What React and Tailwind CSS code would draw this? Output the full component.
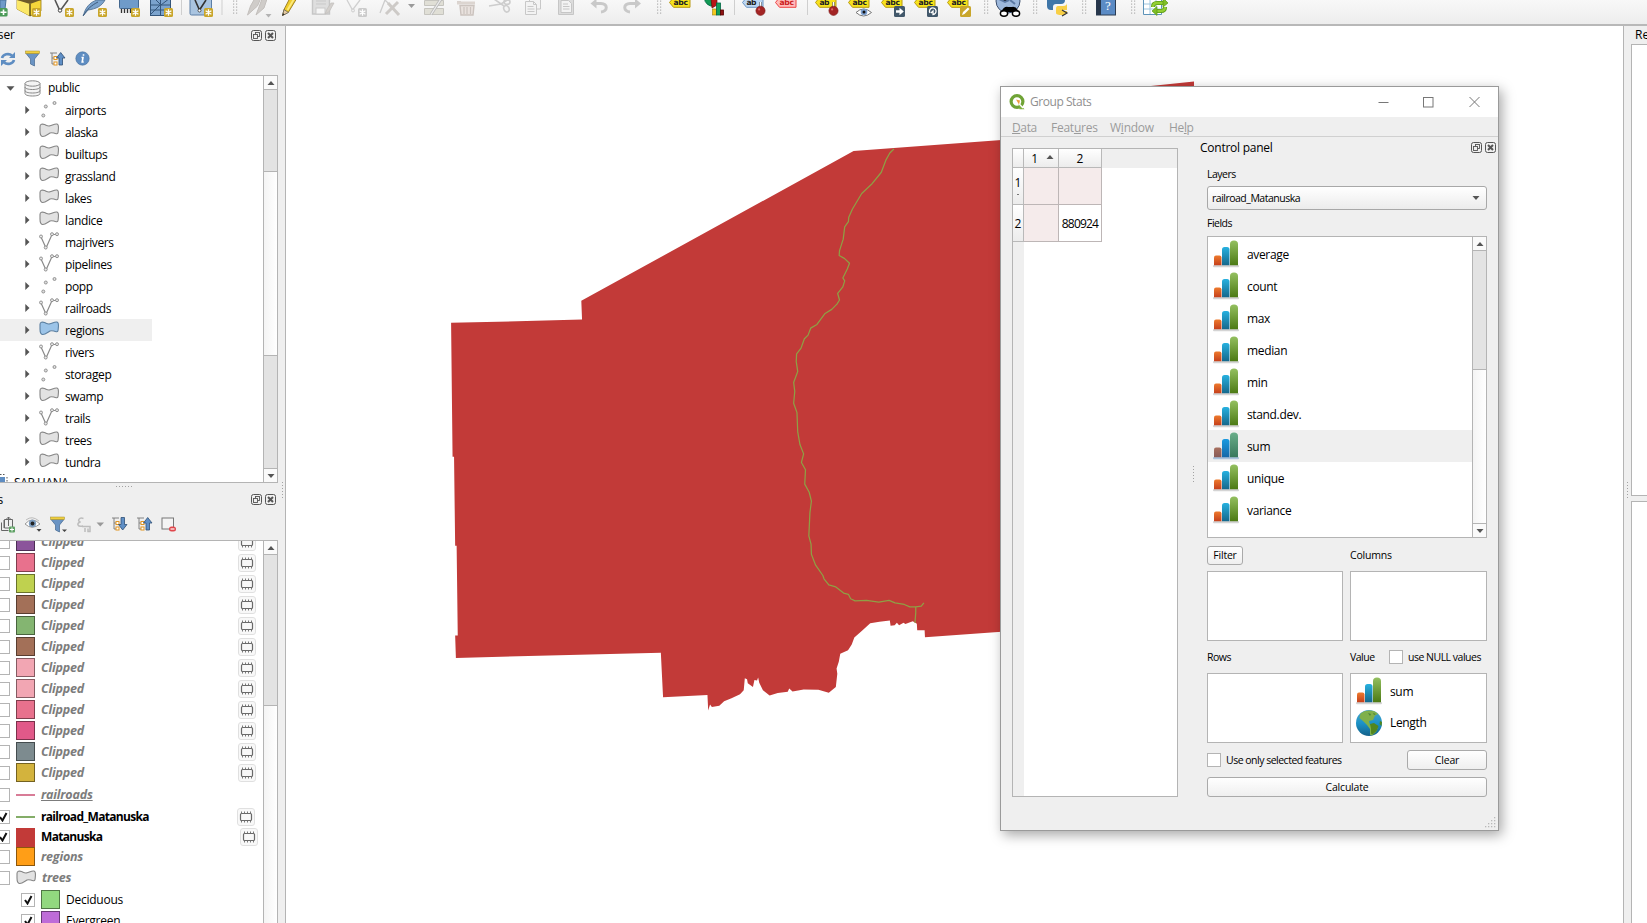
import React from "react";

const ui = "font-['Open_Sans','Noto_Sans',sans-serif]";

/* ---------- toolbar ---------- */

function Star({ x, y = 8, c = "#c9a62b" }) {
  return (
    <g>
      <rect x={x} y={y} width="9" height="9" rx="1.5" fill={c} />
      <path d={`M${x + 4.5} ${y + 1.2}v6.6M${x + 1.6} ${y + 2.8}l5.8 3.4M${x + 7.4} ${y + 2.8}l-5.8 3.4`} stroke="#fff" strokeWidth="1.3" />
    </g>
  );
}

function Grip({ x }) {
  return (
    <g fill="#b0b0b0">
      {[0, 3, 6, 9, 12].map((y) => (
        <g key={y}>
          <rect x={x} y={y + 0.5} width="1.2" height="1.2" />
          <rect x={x + 3} y={y + 0.5} width="1.2" height="1.2" />
        </g>
      ))}
    </g>
  );
}

const Sep = ({ x }) => <path d={`M${x} 0V15`} stroke="#cfcfcf" />;

function Tag({ x, fill = "#f7e21c", stroke = "#b79a12", color = "#222", text = "abc" }) {
  return (
    <g>
      <path d={`M${x} 2.5l4-5H${x + 20.5}V7.3H${x + 4}z`} fill={fill} stroke={stroke} strokeWidth="1" />
      <text x={x + 4} y="5.4" fontSize="7.6" fontWeight="700" fill={color} className="font-['DejaVu_Sans',sans-serif]" textLength={text === "ab" ? 10 : 14.5}>
        {text}
      </text>
    </g>
  );
}

const Pin = ({ x }) => (
  <g>
    <path d={`M${x} 2v6`} stroke="#777" strokeWidth="2.4" />
    <path d={`M${x} 2v6`} stroke="#fff" strokeWidth="1" />
    <circle cx={x} cy="10.8" r="4.6" fill="#a32424" stroke="#7d1a1a" strokeWidth=".6" />
    <circle cx={x - 1.4} cy="9.4" r="1.1" fill="#d66" />
  </g>
);

const tools = [
  [0, 13, <g key="a"><path d="M0 0h6l-1 9H0z" fill="#6f9bc9" stroke="#4a729c" /><rect x="-1" y="8" width="8.6" height="8.5" rx="1.5" fill="#4a9a57" /><path d="M3.5 9.5v5.5M.5 12.3h6" stroke="#fff" strokeWidth="1.6" /></g>],
  [13, 48, <g key="b"><path d="M17 0v9l13 7 11-5V0z" fill="#f6d63a" stroke="#9a7b10" strokeWidth=".8" /><path d="M17 0v9l13 7V3z" fill="#fbe868" /><path d="M17 0l13 4 11-4z" fill="#6d5a2a" /><path d="M30 4v12" stroke="#463a14" strokeWidth="1.3" /><Star x={32} y={8} /></g>],
  [48, 78, <g key="c"><path d="M55 0l5 11L68 0" fill="none" stroke="#555" strokeWidth="1.6" /><circle cx="60" cy="10.5" r="1.7" fill="#fff" stroke="#444" /><Star x={65} /></g>],
  [78, 113, <g key="d"><path d="M83.500 15.500C85 8 90 2 97 0h8c-3 6-9 9-17 10z" fill="#7ba3cd" stroke="#48698e" strokeWidth=".8" /><path d="M83 16C87 9 92 5 98 2" stroke="#3d5b7d" fill="none" /><Star x={98} /></g>],
  [113, 145, <g key="e"><rect x="119.500" y="-4" width="19" height="12.500" rx="1" fill="#6f9bc9" stroke="#44688f" /><path d="M121.500 9v4M124.500 9v4M127.500 9v4M130.500 9v4" stroke="#333" strokeWidth="1.300" /><Star x={131} /></g>],
  [145, 177, <g key="f"><rect x="150.500" y="-4" width="20" height="19.500" fill="#7ba3cd" stroke="#34567b" /><path d="M150 5h21M160.500-2V16M150 10h21M151 14l9-9M161 5l-7-7M161 5l9-7" stroke="#34567b" fill="none" /><Star x={164} /></g>],
  [177, 229, <g key="g"><Sep x={181.5} /><rect x="190" y="-3" width="21.500" height="18" rx="1.500" fill="#a9c4e0" stroke="#5c7fa6" /><path d="M195 0l4.500 10L206 0" fill="none" stroke="#333" strokeWidth="1.600" /><circle cx="199.500" cy="10.500" r="1.500" fill="#fff" stroke="#333" strokeWidth=".8" /><Star x={204} /><Sep x={222} /></g>],
  [229, 275, <g key="h"><Grip x={233} /><path d="M247.500 15l3-9 4-7h6l-3 7zM256 15l3-8 3-8h5l-3 9z" fill="#cfccc9" stroke="#c3bfbc" /><path d="M265.500 14h6l-3 3.500z" fill="#b3b3b3" /></g>],
  [275, 304, <g key="i"><path d="M282.500 15.500l1.500-6L290-2h7l-8.500 14z" fill="#f0cd2b" stroke="#94761a" strokeWidth=".9" /><path d="M287.500 10L294-1" stroke="#fbe97e" strokeWidth="1.800" /><path d="M282.500 15.500l1.500-6 4.500 3z" fill="#e4c9a0" stroke="#555" strokeWidth=".7" /><path d="M282.200 15.800l.8-2.500 1.600 1z" fill="#222" /></g>],
  [304, 340, <g key="j"><path d="M312.500-2h17v16h-17z" fill="#dedede" stroke="#c6c6c6" strokeWidth="1.400" /><rect x="316" y="8" width="9" height="6" fill="#f6f6f6" stroke="#cacaca" /><path d="M316 1h10M316 4h10" stroke="#c9c9c9" /><path d="M325 14l2-5 4-6h3l-5 9z" fill="#d3d0cd" stroke="#c2bebb" strokeWidth=".7" /></g>],
  [340, 374, <g key="k"><path d="M347 0l5.500 10L360 0" fill="none" stroke="#d0d0d0" strokeWidth="1.300" /><circle cx="353" cy="10.500" r="1.500" fill="#eee" stroke="#cfcfcf" /><Star x={358} c="#cbcbcb" /></g>],
  [374, 418, <g key="l"><path d="M380 13l5-13 8 8" fill="none" stroke="#ccc" strokeWidth="1.300" /><path d="M386 14L398 2M388 3l11 12" stroke="#cdcac7" strokeWidth="3" /><path d="M408 4h7l-3.500 4z" fill="#9a9a9a" /></g>],
  [418, 450, <g key="m"><path d="M424.500.500h19v5h-19zM424.500 8.500h19v6h-19z" fill="#e0dfd6" stroke="#c6c5bf" /><path d="M431 14.500L441-1" stroke="#bbb" strokeWidth="3" /><path d="M431 14.500L441-1" stroke="#eee" strokeWidth="1.200" /></g>],
  [450, 482, <g key="n"><path d="M457 2h4M460 5.500h14l-1 9.500h-12z" fill="#e9e2de" stroke="#cbc3be" strokeWidth="1.400" /><path d="M457 1.500h18v3h-18z" fill="#dcd5d0" /><path d="M464 7v7M467 7v7M470.500 7v7" stroke="#cbc3be" strokeWidth="1.200" /></g>],
  [482, 518, <g key="o" fill="none" stroke="#cdcdcd" strokeWidth="1.600"><path d="M489 6l12-2 8-5M494-1l10 7" /><ellipse cx="507" cy="2" rx="3" ry="2.300" /><ellipse cx="506.500" cy="9" rx="2.600" ry="3.300" transform="rotate(-25 506 9)" /></g>],
  [518, 550, <g key="p" fill="#f3f3f3" stroke="#c8c8c8"><path d="M529.500-2h11v11h-11z" /><path d="M525.500 1.500h8l3 3v10h-11z" /><path d="M533.500 1.500v3h3M527.500 6.500h6M527.500 9h7M527.500 11.500h7" fill="none" /></g>],
  [550, 582, <g key="q" fill="#f3f3f3" stroke="#c6c6c6"><path d="M558.500-2h15v16.500h-15z" fill="#dcdcdc" /><path d="M561 .500h7.500l3 3v9H561z" /><path d="M563 4h5M563 6.500h6.500M563 9h6.500" /></g>],
  [582, 650, <g key="r" fill="none" stroke="#c9c9c9" strokeWidth="3"><path d="M593 3.500h8c7 0 7 8 0 8.500" /><path d="M590.500 3.500l6-5v10z" fill="#c9c9c9" stroke="none" /><path d="M638 3.500h-8c-7 0-7 8 0 8.500" /><path d="M641 3.500l-6-5v10z" fill="#c9c9c9" stroke="none" /></g>],
  [650, 697, <g key="s"><Grip x={657} /><Tag x={669.500} /></g>],
  [697, 738, <g key="t"><path d="M714-2v8a8 8 0 0 1-9.500-8z" fill="#139a55" stroke="#064" strokeWidth=".8" /><path d="M711-2h6v7l-5 3z" fill="#b71616" stroke="#600" strokeWidth=".6" /><rect x="712.500" y="9" width="4" height="6" fill="#f3c81e" stroke="#a5850a" strokeWidth=".6" /><rect x="716.500" y="3" width="4" height="12" fill="#13a05a" stroke="#064" strokeWidth=".8" /><rect x="720.500" y="10" width="3" height="5" fill="#8e1212" stroke="#500" strokeWidth=".8" /><Sep x={734.500} /></g>],
  [738, 770, <g key="u"><Tag x={742.500} fill="#bcd6f2" stroke="#6b95c4" text="ab" /><Pin x={760.500} /></g>],
  [770, 811, <g key="v"><Tag x={775.500} fill="#fbb" stroke="#e44" color="#c22" /><Sep x={807.500} /></g>],
  [811, 843, <g key="w"><Tag x={815.500} text="ab" /><Pin x={833.500} /></g>],
  [843, 876, <g key="x"><Tag x={848.500} /><path d="M856 12.500q7.500-7 15.500 0-8 7-15.500 0z" fill="#fff" stroke="#777" /><circle cx="864" cy="12" r="3.300" fill="#7da0d0" /><circle cx="864" cy="12" r="1.500" fill="#111" /></g>],
  [876, 909, <g key="y"><Tag x={881.500} /><rect x="894" y="6" width="11" height="11" rx="1.500" fill="#42586b" /><path d="M896 10.200h3.500v-2.400l4.300 3.700-4.300 3.700v-2.400H896z" fill="#fff" /></g>],
  [909, 942, <g key="z"><Tag x={914.500} /><rect x="927" y="6" width="11" height="11" rx="1.500" fill="#42586b" /><path d="M930 13a3.300 3.300 0 1 1 3 1.500v-3.500l-2 2" fill="none" stroke="#fff" strokeWidth="1.300" /></g>],
  [942, 977, <g key="A"><Tag x={947.500} /><rect x="960" y="6" width="11" height="11" rx="1.500" fill="#c9a62b" /><path d="M962 15l1-3 5-4.500 1.500 1.500-5 5z" fill="#fff" /></g>],
  [977, 1028, <g key="B"><Grip x={984} /><circle cx="1008" cy="1" r="12" fill="#9db8dc" stroke="#3c4f6e" /><path d="M999-1l6 3 4-2M1010 0l5 4" stroke="#5c7aa5" strokeWidth="2" /><path d="M1001 12q3-6 7-5h4q4-1 7 5z" fill="#000" /><ellipse cx="1004" cy="13.500" rx="3.600" ry="2.700" fill="#fff" stroke="#000" strokeWidth="1.500" /><ellipse cx="1016" cy="13.500" rx="3.600" ry="2.700" fill="#fff" stroke="#000" strokeWidth="1.500" /></g>],
  [1028, 1077, <g key="C"><Grip x={1033} /><path d="M1047 0v6q0 4 4 4h2V7q0-3 3-3h5q4 0 4-4z" fill="#3f76a8" /><path d="M1067 0v3q0 3-4 3h-5q-2 0-2 3v4q0 2 6 2 6 0 5-4h-5v-1h5z" fill="#f8cf46" /><path d="M1062 10l5 3-5 3" fill="none" stroke="#333" strokeWidth="1.200" /></g>],
  [1077, 1126, <g key="D"><Grip x={1082} /><rect x="1096.500" y="-3" width="19" height="18" fill="#5b8bc5" stroke="#2c3c53" /><rect x="1096.500" y="-3" width="4.500" height="18" fill="#27364b" /><text x="1105" y="10" fontSize="13" fill="#fff" className="font-['Liberation_Serif',serif]">?</text></g>],
  [1126, 1180, <g key="E"><Grip x={1131} /><path d="M1143.500-2h18v16.500h-18z" fill="#fff" stroke="#5d93b8" /><path d="M1144 4h18M1144 9h18M1150 0v14M1156 0v14" stroke="#9cc5de" /><path d="M1164 3h-7q-4 0-4 4M1154 11h7q4 0 4-4" fill="none" stroke="#5a9a14" strokeWidth="4" /><path d="M1164 3h-7q-4 0-4 4M1154 11h7q4 0 4-4" fill="none" stroke="#93cf32" strokeWidth="2.400" /><path d="M1163-2l5 5-5 4zM1157 6.500l-5 4.500 5 4.500z" fill="#7fbe25" stroke="#5a9a14" strokeWidth=".7" /></g>],
];

function Toolbar() {
  return (
    <div className="flex h-[26px] shrink-0 border-b-2 border-[#b8b8b8] bg-gradient-to-b from-[#f8f8f8] to-[#ededed]">
      {tools.map(([a, b, g]) => (
        <svg key={a} width={b - a} height="24" viewBox={`${a} 0 ${b - a} 24`} className="shrink-0">
          {g}
        </svg>
      ))}
    </div>
  );
}

/* ---------- small pieces ---------- */

function DockButtons() {
  return (
    <div className="flex gap-[3px]">
      <svg width="11" height="11" viewBox="0 0 11 11" fill="none" stroke="#555">
        <rect x=".5" y=".5" width="10" height="10" rx="2" />
        <rect x="4.500" y="2.500" width="4" height="4" strokeWidth=".9" />
        <rect x="2.500" y="4.500" width="4" height="4" fill="#efefef" strokeWidth=".9" />
      </svg>
      <svg width="11" height="11" viewBox="0 0 11 11" fill="none" stroke="#555">
        <rect x=".5" y=".5" width="10" height="10" rx="2" />
        <path d="M3 3l5 5M8 3l-5 5" strokeWidth="2" />
      </svg>
    </div>
  );
}

const Up = () => <svg width="8" height="4" viewBox="0 0 8 4"><path d="M.5 4L4 0l3.500 4z" fill="#555" /></svg>;
const Down = () => <svg width="8" height="4" viewBox="0 0 8 4"><path d="M.5 0L4 4l3.500-4z" fill="#555" /></svg>;

const DotsV = () => <svg width="2" height="18" viewBox="0 0 2 18"><path d="M.5 0v18" stroke="#a2a2a2" strokeDasharray="1 2" /></svg>;
const DotsH = () => <svg width="17" height="2" viewBox="0 0 17 2"><path d="M0 .5h17" stroke="#a2a2a2" strokeDasharray="1 2" /></svg>;

function ScrollBar({ before, handle, after, last = true }) {
  return (
    <div className="flex w-[14px] shrink-0 flex-col border-l border-[#b4b4b4]">
      <div className="flex h-[14px] shrink-0 items-center justify-center border-b border-[#b4b4b4] bg-[#fafafa]"><Up /></div>
      <div className={`shrink-0 bg-[#e3e3e3] ${before}`} />
      <div className={`border-t border-[#b4b4b4] bg-gradient-to-r from-[#f4f4f4] to-white ${handle}`} />
      {after && <div className={`bg-[#e3e3e3] ${after}`} />}
      {last && <div className="flex h-[14px] shrink-0 items-center justify-center border-t border-[#b4b4b4] bg-[#fafafa]"><Down /></div>}
    </div>
  );
}

function PolyIcon({ blue }) {
  return (
    <svg width="20" height="15" viewBox="0 0 20 15" className="shrink-0">
      <path d="M1 3.500C1 1 3.500.800 5.500 1.500s3 2 5.500 1.300S16 .500 18 1s1.500 3 1.300 6-.3 4-2 3.700c-3-.5-4.300-1.700-6.300-.7S6 13.800 3.500 13.500 1 11 1 8z" fill={blue ? "#9cc4e8" : "#e2e2e2"} stroke={blue ? "#5b7fa0" : "#858585"} strokeWidth="1.100" />
    </svg>
  );
}
function LineIcon() {
  return (
    <svg width="20" height="18" viewBox="0 0 20 18" className="shrink-0" fill="none" stroke="#8a8a8a">
      <path d="M2 5l5 11L13 2.500h5" strokeWidth="1.200" />
      <g fill="#e8e8e8" strokeWidth=".9"><circle cx="2" cy="4.500" r="1.500" /><circle cx="6.700" cy="15.500" r="1.500" /><circle cx="13" cy="2.200" r="1.500" /><circle cx="18" cy="2.200" r="1.500" /></g>
    </svg>
  );
}
function PointIcon() {
  return (
    <svg width="20" height="18" viewBox="0 0 20 18" className="shrink-0" fill="#ddd" stroke="#8a8a8a" strokeWidth=".9">
      <circle cx="4.300" cy="15.500" r="1.500" /><circle cx="6.800" cy="6.500" r="1.500" /><circle cx="15.500" cy="3" r="1.500" />
    </svg>
  );
}

const items = [
  ["airports", "p"], ["alaska", "g"], ["builtups", "g"], ["grassland", "g"], ["lakes", "g"], ["landice", "g"],
  ["majrivers", "l"], ["pipelines", "l"], ["popp", "p"], ["railroads", "l"], ["regions", "b"], ["rivers", "l"],
  ["storagep", "p"], ["swamp", "g"], ["trails", "l"], ["trees", "g"], ["tundra", "g"],
];

const Funnel = ({ arrow }) => (
  <svg width="18" height="17" viewBox="0 0 18 17">
    <path d="M1 3.500h13L9.500 9v7l-4-2V9z" fill="#6a94c4" stroke="#45698f" strokeWidth=".7" />
    <rect x=".5" y="1" width="14" height="2.600" fill="#f0cf3f" stroke="#a08a2a" strokeWidth=".5" />
    {arrow && <path d="M12 13.500h5l-2.500 2.500z" fill="#444" />}
  </svg>
);
const TreeArrow = ({ down }) => (
  <svg width="16" height="16" viewBox="0 0 16 16">
    <path d="M0 2h7M2 2v11h3M2 7h3" stroke="#777" fill="none" strokeWidth=".9" />
    <rect x="4" y="5.500" width="3" height="3" fill="#fff" stroke="#e29520" /><rect x="4" y="11" width="3" height="3" fill="#fff" stroke="#e29520" />
    <path d={down ? "M9 1.500h3.500v7H15L10.700 14 6.500 8.500H9z" : "M9 14h3.500V7H15L10.700 1.500 6.500 7H9z"} fill="#5f8fc6" stroke="#2f4f75" strokeWidth=".8" />
  </svg>
);

function Browser() {
  return (
    <section className="flex h-[457px] shrink-0 flex-col">
      <div className="flex h-[18px] items-center justify-between pr-[2px]">
        <span className="-ml-[31px] text-[12px] leading-none tracking-[-0.1px]">Browser</span>
        <DockButtons />
      </div>
      <div className="flex h-[31px] items-center pb-[2px]">
        <svg width="16" height="16" viewBox="0 0 16 16" className="mr-[9px]" fill="none" stroke="#5e8dc2" strokeWidth="2.600">
          <path d="M2 7a6 5 0 0 1 10-2.500M14 9a6 5 0 0 1-10 2.500" />
          <path d="M15 1v6H9zM1 15V9h6z" fill="#5e8dc2" stroke="none" />
        </svg>
        <Funnel />
        <span className="ml-[7px]"><TreeArrow /></span>
        <svg width="15" height="15" viewBox="0 0 15 15" className="ml-[9px]">
          <circle cx="7.500" cy="7.500" r="6.700" fill="#5e8dc2" stroke="#476f9c" strokeWidth=".6" />
          <path d="M8.500 3.200v1.600M6.500 6.500h1.500l-.8 4.500h1.500" stroke="#fff" strokeWidth="1.600" fill="none" />
        </svg>
      </div>
      <div className="flex min-h-0 flex-1 border-y border-r border-[#b4b4b4] bg-white">
        <div className="flex min-w-0 flex-1 flex-col overflow-hidden pt-px text-[12px] leading-[22px] tracking-[-0.38px]">
          <div className="flex h-[22px] shrink-0 items-center pl-[6px]">
            <svg width="9" height="5" viewBox="0 0 9 5"><path d="M.5.300h8L4.500 4.800z" fill="#555" /></svg>
            <svg width="17" height="17" viewBox="0 0 17 17" className="mx-[9px]" fill="#f4f4f4" stroke="#888">
              <path d="M1 3.500v10c0 1.500 3 2.500 7.500 2.500s7.500-1 7.500-2.500v-10" /><ellipse cx="8.500" cy="3.500" rx="7.500" ry="2.700" /><path d="M1 7c0 1.500 3 2.500 7.500 2.500S16 8.500 16 7M1 10.500C1 12 4 13 8.500 13s7.500-1 7.500-2.500" fill="none" />
            </svg>
            <span className="-ml-[2px]">public</span>
          </div>
          {items.map(([n, t]) => (
            <div key={n} className={`flex h-[22px] w-[152px] shrink-0 items-center pl-[25px] ${t === "b" ? "bg-[#efefef]" : ""}`}>
              <svg width="5" height="8" viewBox="0 0 5 8" className="mr-[9px] mb-px"><path d="M.3 0L4.500 4 .3 8z" fill="#555" /></svg>
              <span className="mb-[3px]">{t === "p" ? <PointIcon /> : t === "l" ? <LineIcon /> : <PolyIcon blue={t === "b"} />}</span>
              <span className="ml-[6px] pt-px">{n}</span>
            </div>
          ))}
          <div className="flex h-[22px] shrink-0">
            <svg width="8" height="12" viewBox="0 0 8 12" className="mt-[1px]"><rect x="-2" y="3" width="7" height="9" fill="#5e8dc2" /><path d="M0 .5h5M7 3v8" stroke="#555" strokeDasharray="1.500 1.500" /></svg>
            <span className="ml-[6px] leading-[20px]">SAP HANA</span>
          </div>
        </div>
        <ScrollBar before="h-[81px]" handle="h-[185px] shrink-0 border-b" after="flex-1" />
      </div>
    </section>
  );
}

const Chip = () => (
  <svg width="18" height="18" viewBox="0 0 18 18">
    <rect x=".5" y=".5" width="17" height="17" rx="2.500" fill="#f8f8f8" stroke="#e0e0e0" />
    <path d="M4.500 3.500v11M7.500 3.500v11M10.500 3.500v11M13.500 3.500v11" stroke="#7a7a7a" />
    <rect x="3.500" y="5.500" width="11" height="7" rx="1" fill="#f8f8f8" stroke="#6a6a6a" strokeWidth="1.200" />
  </svg>
);

function Check({ on }) {
  return (
    <span className="flex h-[14px] w-[14px] shrink-0 items-center justify-center border border-[#b4b4b4] bg-white">
      {on && <svg width="9" height="10" viewBox="0 0 9 10"><path d="M1 5l2.500 3.500L7.500 1" fill="none" stroke="#111" strokeWidth="2" /></svg>}
    </span>
  );
}

const clipped = ["bg-[#8b549b]", "bg-[#e8718d]", "bg-[#bfd14f]", "bg-[#a37058]", "bg-[#84b571]", "bg-[#a37058]", "bg-[#f2a6b3]", "bg-[#f2a6b3]", "bg-[#e8718d]", "bg-[#e15989]", "bg-[#7d8b8f]", "bg-[#d3b33d]"];
const Swatch = ({ c }) => <span className={`h-[19px] w-[19px] shrink-0 border border-black/45 ${c}`} />;

const dimText = "text-[#7c7c7c] italic font-bold tracking-[-0.2px]";
const boldText = "text-[12px] font-bold tracking-[-0.68px]";

function LayerRow({ h, on, mark, children, chip, cls = dimText, chipCls = "ml-auto mr-[7px]" }) {
  return (
    <div className={`flex shrink-0 items-center ${h}`}>
      <span className="-ml-[4px] mr-[6px]"><Check on={on} /></span>
      {mark}
      <span className={`ml-[6px] ${cls}`}>{children}</span>
      {chip && <span className={chipCls}><Chip /></span>}
    </div>
  );
}

function Layers() {
  return (
    <section className="flex min-h-0 flex-1 flex-col overflow-hidden">
      <div className="flex h-[8px] shrink-0 items-center justify-center pr-[29px]"><DotsH /></div>
      <div className="flex h-[17px] shrink-0 items-center justify-between pr-[2px]">
        <span className="-ml-[33px] text-[12px] leading-none">Layers</span>
        <DockButtons />
      </div>
      <div className="flex h-[32px] shrink-0 items-center">
        <svg width="16" height="17" viewBox="0 0 16 17" className="mr-[9px]" fill="none" stroke="#666"><path d="M1.500 6.500v8h7M4 4v8M4.500 3.500v8.500h8V3.500zM8.500 10V1M6.500 3l2-2 2 2" /><rect x="9" y="10.500" width="6" height="6" rx="1" fill="#5fa165" stroke="none" /><path d="M12 11.500v4M10 13.500h4" stroke="#fff" /></svg>
        <svg width="17" height="15" viewBox="0 0 17 15" className="mr-[8px]"><path d="M0 7Q7-1 15 7 7 13.500 0 7z" fill="#fff" stroke="#999" /><path d="M1 3q6-5 13 1" fill="none" stroke="#bbb" /><circle cx="7.500" cy="6.500" r="3.700" fill="#7d9dbf" /><circle cx="7.500" cy="6.500" r="1.900" fill="#222" /><path d="M11.500 12h5L14 14.700z" fill="#444" /></svg>
        <Funnel arrow />
        <svg width="28" height="17" viewBox="0 0 28 17" className="ml-[8px] mr-[8px]" fill="none" stroke="#bdbdbd"><path d="M7.500 2.500C3 1 .8 5 4.500 6 0 7 1.500 11.500 7 10" strokeWidth="1.500" /><path d="M6 10.500h8v5h-2v-3M9 12v4" strokeWidth="1.500" /><path d="M20.500 6.500H28L24.300 10.500z" fill="#999" stroke="none" /></svg>
        <TreeArrow down />
        <span className="ml-[9px]"><TreeArrow /></span>
        <svg width="15" height="15" viewBox="0 0 15 15" className="ml-[8px]"><rect x="1" y="1" width="11.500" height="11" fill="#f4f4f4" stroke="#777" /><rect x="8" y="9.500" width="7" height="5" rx="2.500" fill="#e0474c" /><path d="M9.500 12h4" stroke="#fff" strokeWidth="1.200" /></svg>
      </div>
      <div className="flex min-h-0 flex-1 border-r border-t border-[#b4b4b4] bg-white">
        <div className="flex min-w-0 flex-1 flex-col overflow-hidden text-[12.5px] leading-[20px]">
          <div className="-mt-[10px] flex flex-col">
            {clipped.map((c, i) => <LayerRow key={i} h="h-[21px]" mark={<Swatch c={c} />} chip>Clipped</LayerRow>)}
            <LayerRow h="h-[24px]" mark={<span className="h-[2px] w-[19px] bg-[#d87c97]" />} cls={`underline ${dimText}`}>railroads</LayerRow>
            <LayerRow h="h-[20px]" on mark={<span className="h-[2px] w-[19px] bg-[#84ad68]" />} cls={boldText} chip chipCls="ml-auto mr-[8px]">railroad_Matanuska</LayerRow>
            <LayerRow h="h-[20px]" on mark={<span className="h-[19px] w-[19px] bg-[#c23a38]" />} cls={boldText} chip chipCls="ml-auto mr-[5px]">Matanuska</LayerRow>
            <LayerRow h="h-[19px]" mark={<Swatch c="bg-[#ff9e17]" />}>regions</LayerRow>
            <LayerRow h="h-[23px]" mark={<PolyIcon />}>trees</LayerRow>
            {[["Deciduous", "bg-[#92d87f]"], ["Evergreen", "bg-[#be6bd8]"]].map(([n, c]) => (
              <div key={n} className="flex h-[21px] items-center pl-[21px]">
                <Check on /><span className="ml-[6px] flex"><Swatch c={c} /></span><span className="ml-[6px] text-[12px] tracking-[-0.25px]">{n}</span>
              </div>
            ))}
          </div>
        </div>
        <ScrollBar before="h-[150px]" handle="flex-1" last={false} />
      </div>
    </section>
  );
}

/* ---------- map ---------- */

function MapView() {
  return (
    <svg width="1337" height="897" viewBox="286 26 1337 897" className="block">
      <path d="M1139 87.300L1194 81.500V95h-60z" fill="#c23a38" />
      <g transform="translate(430 80) scale(.36994 .40816)">
        <path fill="#c23a38" d="M1600 143L1545 147 1145 174 409 541 411 587 57 595 61 923 65 923 68 1141 72 1141 75 1361 68 1361 70 1416 624 1403 630 1512 750 1507 752 1545 757 1530 762 1536 782 1533 795 1522 815 1515 838 1505 848 1495 851 1466 857 1468 859 1478 873 1487 877 1470 884 1471 887 1464 890 1477 900 1495 918 1508 940 1502 967 1499 971 1491 980 1498 1010 1493 1050 1494 1078 1501 1097 1487 1101 1455 1099 1442 1105 1425 1109 1406 1130 1397 1140 1383 1147 1366 1167 1350 1190 1331 1215 1327 1243 1324 1245 1337 1256 1336 1262 1330 1268 1336 1280 1330 1285 1333 1305 1326 1316 1332 1317 1348 1337 1348 1338 1365 1545 1352 1600 1349z" />
        <path fill="none" stroke="#8f9f45" strokeWidth="1.250" vectorEffect="non-scaling-stroke" strokeLinejoin="round" d="M1254 169L1243 179 1233 195 1220 226 1213 234 1195 254 1167 278 1142 316 1132 336 1131 347 1121 360 1117 390 1107 418 1106 430 1120 437 1134 449 1128 463 1116 485 1121 492 1116 507 1102 523 1107 539 1100 549 1086 562 1068 572 1046 599 1029 608 1022 625 1012 634 1003 657 991 671 990 690 994 714 983 741 986 763 983 792 992 815 994 862 1000 893 1010 916 1004 937 1015 955 1013 990 1025 1010 1031 1032 1027 1060 1024 1117 1030 1137 1031 1162 1042 1188 1062 1214 1065 1222 1078 1237 1097 1242 1118 1257 1131 1260 1137 1271 1149 1276 1180 1275 1213 1279 1241 1275 1257 1281 1282 1285 1297 1291 1313 1291 1313 1305 1311 1330M1313 1291L1328 1289 1335 1281" />
      </g>
    </svg>
  );
}

/* ---------- dialog ---------- */

const small = "text-[10.5px] leading-[14px] tracking-[-0.5px]";
const listText = "text-[12px] tracking-[-0.35px]";

function Bars({ dim }) {
  const [a, b, c, d] = dim ? ["#a8705e", "#1a9ae0", "#6aae8a", "#a9c2dc"] : ["#ee7a2c", "#27b1e0", "#94c060", "#d4d4d4"];
  const [a2, b2, c2] = dim ? ["#875a58", "#1568a8", "#38785c"] : ["#c5401c", "#15688c", "#4c7a14"];
  const id = dim ? "d" : "n";
  const grad = (k, x, y) => <linearGradient id={k + id} x1="0" y1="0" x2="0" y2="1"><stop offset="0" stopColor={x} /><stop offset="1" stopColor={y} /></linearGradient>;
  return (
    <svg width="26" height="28" viewBox="0 0 26 28" className="shrink-0">
      <defs>{grad("o", a, a2)}{grad("u", b, b2)}{grad("g", c, c2)}</defs>
      <rect x="0" y="25" width="26" height="2.300" rx="1" fill={d} />
      <path d="M1 25.200V17.500q0-2 2-2h3.500q2 0 2 2v7.700z" fill={`url(#o${id})`} />
      <path d="M9 25.200V9.500q0-2.500 2.500-2.500h2.500q2.500 0 2.500 2.500v15.700z" fill={`url(#u${id})`} />
      <path d="M17 25.200V4q0-3.500 4-3.500T25 4v21.200z" fill={`url(#g${id})`} />
    </svg>
  );
}

function Globe() {
  return (
    <svg width="26" height="28" viewBox="0 0 26 28" className="shrink-0">
      <defs><linearGradient id="sea" x1="0" y1="0" x2="0" y2="1"><stop offset="0" stopColor="#4ba3c8" /><stop offset=".5" stopColor="#1c93c8" /><stop offset="1" stopColor="#14618a" /></linearGradient></defs>
      <circle cx="13" cy="14" r="13" fill="url(#sea)" />
      <path d="M4.500 4.500Q10 0 19 2.500l3 2.500-3 1.500-2 4.500-4 1 1 4 4-1 4 3-2 5-4 3.500-2-.5v-6l-3-4-4-4-3.500-3z" fill="#7fb04a" />
      <path d="M14 15l4-1 4.500 3-2 5-4 3.500-1.500-1v-5z" fill="#52861e" />
      <path d="M24 12l2 1-.5 4-2-2z" fill="#52861e" />
      <path d="M12 4l3 1-1 2zM17 4l3 1-2 1z" fill="#4b8437" />
    </svg>
  );
}

const Button = ({ className, children }) => (
  <button className={`rounded-[3px] border border-[#aaa] bg-gradient-to-b from-white to-[#efefef] text-center text-[10.5px] leading-[14px] tracking-[-0.2px] ${className}`}>{children}</button>
);

function StatsTable() {
  const head = "border-r border-b border-[#b9b9b9] bg-gradient-to-b from-white to-[#ececec]";
  const cell = "border-r border-b border-[#bdb6b6]";
  return (
    <div className="mt-[11px] flex h-[649px] w-[166px] flex-col border border-[#b4b4b4] bg-white text-[12px] leading-none">
      <div className="flex h-[19px] shrink-0 bg-[#efefef]">
        <div className={`w-[11px] ${head}`} />
        <div className={`flex w-[35px] items-center justify-end gap-[8px] pt-px pr-[4px] ${head}`}>1<span className="mb-[3px]"><Up /></span></div>
        <div className={`flex w-[43px] items-center justify-center pt-px ${head}`}>2</div>
      </div>
      <div className="flex h-[37px] shrink-0">
        <div className={`flex w-[11px] flex-col items-center justify-center gap-[5px] ${head}`}><span>1</span><span className="h-px w-[2px] bg-[#777]" /></div>
        <div className={`w-[35px] bg-[#f5ebeb] ${cell}`} />
        <div className={`w-[43px] bg-[#f5ebeb] ${cell}`} />
      </div>
      <div className="flex h-[37px] shrink-0">
        <div className={`flex w-[11px] items-center justify-center pt-px ${head}`}>2</div>
        <div className={`w-[35px] bg-[#f5ebeb] ${cell}`} />
        <div className={`flex w-[43px] items-center justify-center pt-px tracking-[-0.8px] ${cell}`}>880924</div>
      </div>
      <div className="w-[11px] flex-1 bg-[#efefef]" />
    </div>
  );
}

const fields = ["average", "count", "max", "median", "min", "stand.dev.", "sum", "unique", "variance"];

function ControlPanel() {
  return (
    <div className="flex w-[298px] flex-col">
      <div className="flex h-[21px] items-center justify-between pr-[2px] text-[12px] tracking-[-0.25px]">
        <span className="leading-none">Control panel</span>
        <DockButtons />
      </div>
      <div className={`ml-[7px] flex w-[280px] flex-col ${small}`}>
        <span className="mt-[9px]">Layers</span>
        <div className="mt-[5px] flex h-[24px] items-center justify-between rounded-[3px] border border-[#a8a8a8] bg-gradient-to-b from-white to-[#ececec] pl-[4px] pr-[6px]">
          <span>railroad_Matanuska</span><Down />
        </div>
        <span className="mt-[6px]">Fields</span>
        <div className="mt-[6px] flex h-[302px] border border-[#b4b4b4] bg-white">
          <div className={`flex flex-1 flex-col pt-px ${listText}`}>
            {fields.map((f) => (
              <div key={f} className={`flex h-[32px] shrink-0 items-center gap-[8px] pl-[5px] ${f === "sum" ? "bg-[#efefef]" : ""}`}>
                <Bars dim={f === "sum"} /><span className="pt-px">{f}</span>
              </div>
            ))}
          </div>
          <ScrollBar before="h-[118px]" handle="flex-1" />
        </div>
        <div className="mt-[7px] flex h-[20px] items-center">
          <Button className="h-[19px] w-[36px]">Filter</Button>
          <span className="ml-[107px] tracking-[-0.2px]">Columns</span>
        </div>
        <div className="mt-[6px] flex gap-[7px]">
          <div className="h-[70px] w-[136px] border border-[#b4b4b4] bg-white" />
          <div className="h-[70px] w-[137px] border border-[#b4b4b4] bg-white" />
        </div>
        <div className="flex h-[32px] items-center">
          <span className="w-[143px]">Rows</span>
          <span className="w-[39px]">Value</span>
          <Check /><span className="ml-[5px]">use NULL values</span>
        </div>
        <div className="flex gap-[7px]">
          <div className="h-[70px] w-[136px] border border-[#b4b4b4] bg-white" />
          <div className={`flex h-[70px] w-[137px] flex-col border border-[#b4b4b4] bg-white pt-px ${listText}`}>
            <div className="flex h-[32px] items-center gap-[8px] pl-[5px]"><Bars /><span className="pt-px">sum</span></div>
            <div className="flex h-[32px] items-center gap-[8px] pl-[5px]"><Globe />Length</div>
          </div>
        </div>
        <div className="mt-[7px] flex h-[20px] items-center">
          <Check /><span className="ml-[5px]">Use only selected features</span>
          <Button className="ml-auto h-[20px] w-[80px]">Clear</Button>
        </div>
        <Button className="mt-[7px] h-[20px] w-full">Calculate</Button>
      </div>
    </div>
  );
}

function Dialog() {
  return (
    <div className="absolute left-[1000px] top-[86px] flex h-[745px] w-[499px] flex-col border border-[#9a9a9a] bg-[#efefef] shadow-[3px_4px_12px_rgba(0,0,0,0.35)]">
      <div className="flex h-[30px] shrink-0 items-center bg-white pb-px pl-[8px] text-[12px] tracking-[-0.45px] text-[#8f8f8f]">
        <svg width="17" height="16" viewBox="0 0 17 16">
          <circle cx="8" cy="7.500" r="5.900" fill="none" stroke="#6fa336" strokeWidth="3.200" />
          <path d="M9.500 9l6 6.200h-5z" fill="#7eb03c" /><path d="M8 7.500L14 14" stroke="#fff" strokeWidth="1.400" /><path d="M7 5.500l4 1-1 4z" fill="#ee9b3c" />
        </svg>
        <span className="ml-[4px]">Group Stats</span>
        <svg width="102" height="12" viewBox="0 0 102 12" className="ml-auto mr-[18px]" fill="none" stroke="#777">
          <path d="M.5 6.500h10" /><rect x="45.500" y="1.500" width="9.500" height="9.500" /><path d="M91.500 1l10 10M101.500 1l-10 10" />
        </svg>
      </div>
      <div className="flex h-[20px] shrink-0 items-center border-b border-[#d0d0d0] pl-[11px] pt-[2px] text-[12px] leading-none tracking-[-0.35px] text-[#9b9b9b]">
        <span className="w-[39px]"><u>D</u>ata</span>
        <span className="w-[59px] tracking-[-0.25px]">Feat<u>u</u>res</span>
        <span className="w-[59px] tracking-[-0.25px]">W<u>i</u>ndow</span>
        <span>He<u>l</u>p</span>
      </div>
      <div className="flex min-h-0 flex-1 pl-[11px]">
        <StatsTable />
        <div className="flex w-[22px] justify-end pt-[329px] pr-[5px]"><DotsV /></div>
        <ControlPanel />
      </div>
      <svg width="13" height="12" viewBox="0 0 13 12" className="absolute bottom-px right-px" fill="#b8b8b8">
        {[[10, 0], [10, 3], [7, 3], [10, 6], [7, 6], [4, 6], [10, 9], [7, 9], [4, 9], [1, 9]].map(([x, y]) => <rect key={`${x}-${y}`} x={x} y={y} width="1.300" height="1.300" />)}
      </svg>
    </div>
  );
}

export default function App() {
  return (
    <div className={`relative flex h-[923px] w-[1647px] flex-col overflow-hidden bg-[#efefef] text-black ${ui}`}>
      <Toolbar />
      <div className="flex min-h-0 flex-1">
        <div className="flex w-[285px] shrink-0">
          <div className="flex w-[278px] flex-col">
            <Browser />
            <Layers />
          </div>
          <div className="flex flex-1 justify-end pt-[456px] pr-px"><DotsV /></div>
        </div>
        <div className="flex-1 overflow-hidden border-x border-[#b4b4b4] bg-white"><MapView /></div>
        <div className="flex w-[23px] shrink-0">
          <div className="flex w-[7px] justify-center pt-[456px]"><DotsV /></div>
          <div className="flex w-[16px] flex-col overflow-hidden">
            <span className="h-[18px] shrink-0 pl-[4px] text-[12px] leading-[18px]">Results</span>
            <div className="h-[452px] shrink-0 border border-r-0 border-[#b4b4b4] bg-white" />
            <div className="mt-[5px] flex-1 border border-b-0 border-r-0 border-[#b4b4b4] bg-white" />
          </div>
        </div>
      </div>
      <Dialog />
    </div>
  );
}
